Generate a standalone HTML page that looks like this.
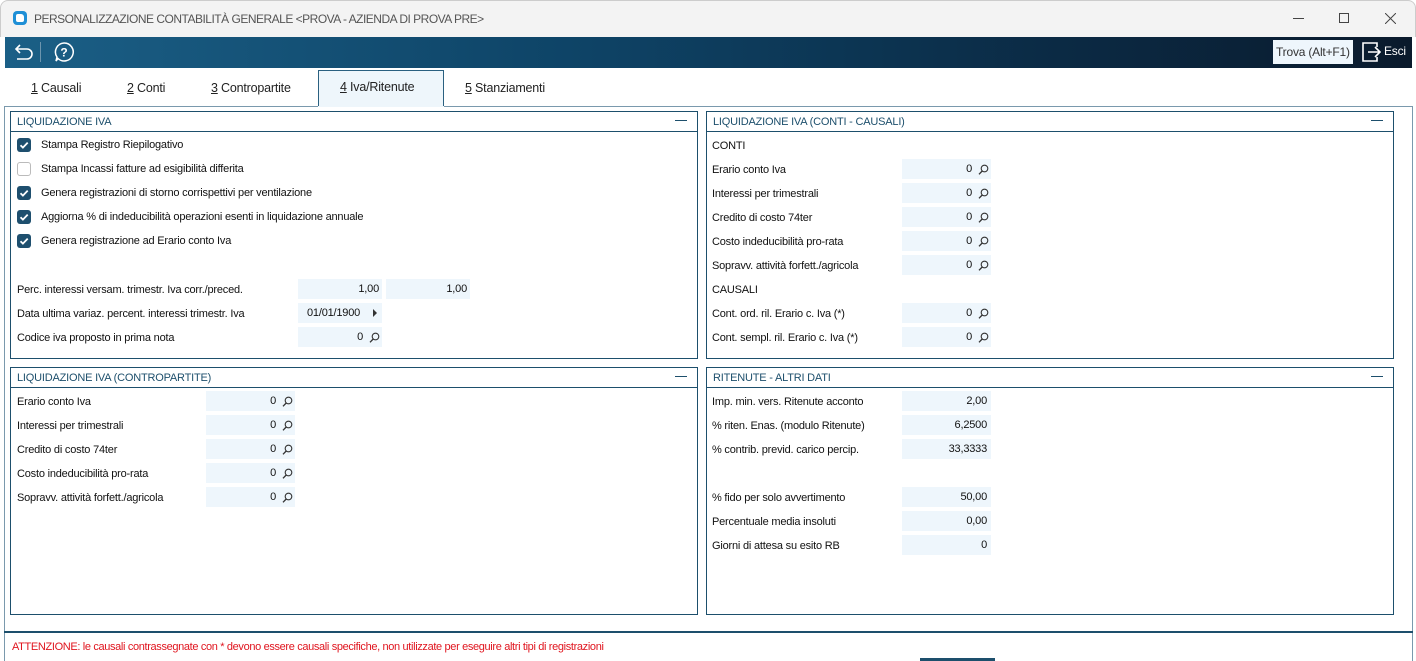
<!DOCTYPE html>
<html><head><meta charset="utf-8"><style>
*{margin:0;padding:0;box-sizing:border-box}
body{width:1416px;height:661px;background:#fff;font-family:"Liberation Sans",sans-serif;font-size:11px;letter-spacing:-0.2px;color:#111;position:relative;overflow:hidden}
.a{position:absolute}
.title{left:0;top:0;width:1416px;height:37px;background:#f3f3f3;border:1px solid #ccc;border-bottom:none;border-radius:8px 8px 0 0}
.tb{left:5px;top:37px;width:1407px;height:31px;background:linear-gradient(90deg,#1b5f86 0%,#0e4467 40%,#0b2a44 75%,#0a1a2c 100%)}
.tab{top:81px;font-size:12.5px;color:#222}
.panel{border:1px solid #1d4f6c;background:#fff}
.ph{position:absolute;left:0;top:0;right:0;height:20px;border-bottom:1px solid #1d4f6c;color:#1d4f6c;font-size:11px;padding:4px 0 0 6px}
.ph .m{position:absolute;right:10px;top:8px;width:12px;height:1px;background:#1d4f6c}
.cb{width:14px;height:14px;border-radius:3px;background:#1e4f6e}
.cb svg{display:block}
.cbe{width:14px;height:14px;border-radius:3px;border:1px solid #bbb;background:#fff}
.f{background:#eef6fc;height:20px;text-align:right;padding:4px 0 0 0}
</style></head><body>
<div class="a title"></div>
<div class="a" style="left:13px;top:11px;width:14px;height:14px;background:#1e8fd6;border-radius:4px"></div>
<div class="a" style="left:16px;top:14px;width:8px;height:8px;background:#fff;border-radius:2px 3px 2px 2px"></div>
<div class="a" style="left:34px;top:12px;font-size:12px;letter-spacing:-0.5px;color:#555">PERSONALIZZAZIONE CONTABILITÀ GENERALE &lt;PROVA - AZIENDA DI PROVA PRE&gt;</div>
<div class="a" style="left:1293px;top:18px;width:11px;height:1px;background:#444"></div>
<div class="a" style="left:1339px;top:13px;width:10px;height:10px;border:1px solid #444"></div>
<svg class="a" style="left:1385px;top:13px" width="11" height="11"><path d="M0 0L11 11M11 0L0 11" stroke="#444" stroke-width="1"/></svg>
<div class="a tb"></div>
<svg class="a" style="left:13px;top:42px" width="22" height="20"><path d="M3 7h11a5 5 0 0 1 0 10H4M7 3L3 7l4 4" stroke="#fff" stroke-width="1.6" fill="none"/></svg>
<div class="a" style="left:40px;top:42px;width:1px;height:20px;background:#6c95ae"></div>
<svg class="a" style="left:53px;top:41px" width="22" height="22"><path d="M11 2a9 9 0 1 1-6 15.5L3 20l1-4A9 9 0 0 1 11 2z" stroke="#fff" stroke-width="1.5" fill="none"/><text x="11" y="15.5" font-size="12" font-family="Liberation Sans" fill="#fff" text-anchor="middle" font-weight="bold">?</text></svg>
<div class="a" style="left:1273px;top:40px;width:80px;height:24px;background:#eef6fc;color:#333;font-size:12px;padding:5px 0 0 3px">Trova (Alt+F1)</div>
<svg class="a" style="left:1361px;top:41px" width="20" height="22"><path d="M8 2H2v18h6M2 2h14v4M16 16v4H2" stroke="#fff" stroke-width="1.6" fill="none"/><path d="M7 11h12M14 6l5 5-5 5" stroke="#fff" stroke-width="1.6" fill="none"/></svg>
<div class="a" style="left:1384px;top:44px;color:#fff;font-size:12px">Esci</div>

<div class="a" style="left:318px;top:70px;width:126px;height:37px;background:#eef6fb;border:1px solid #2a6080;border-bottom:none"></div>
<div class="a tab" style="left:31px"><u>1</u> Causali</div>
<div class="a tab" style="left:127px"><u>2</u> Conti</div>
<div class="a tab" style="left:211px"><u>3</u> Contropartite</div>
<div class="a tab" style="left:340px;top:80px"><u>4</u> Iva/Ritenute</div>
<div class="a tab" style="left:465px"><u>5</u> Stanziamenti</div>
<div class="a" style="left:4px;top:106px;width:1409px;height:555px;border:1px solid #7a99ad;border-bottom:none"></div>
<div class="a" style="left:318px;top:106px;width:126px;height:1px;background:#eef6fb"></div>

<div class="a panel" style="left:10px;top:111px;width:688px;height:248px"><div class="ph">LIQUIDAZIONE IVA<div class="m"></div></div></div>
<div class="a cb" style="left:17px;top:138px"><svg width="14" height="14"><path d="M3.5 7.2l2.4 2.4 4.8-5" stroke="#fff" stroke-width="1.8" fill="none"/></svg></div>
<div class="a" style="left:41px;top:139px">Stampa Registro Riepilogativo</div>
<div class="a cbe" style="left:17px;top:162px"></div>
<div class="a" style="left:41px;top:163px">Stampa Incassi fatture ad esigibilità differita</div>
<div class="a cb" style="left:17px;top:186px"><svg width="14" height="14"><path d="M3.5 7.2l2.4 2.4 4.8-5" stroke="#fff" stroke-width="1.8" fill="none"/></svg></div>
<div class="a" style="left:41px;top:187px">Genera registrazioni di storno corrispettivi per ventilazione</div>
<div class="a cb" style="left:17px;top:210px"><svg width="14" height="14"><path d="M3.5 7.2l2.4 2.4 4.8-5" stroke="#fff" stroke-width="1.8" fill="none"/></svg></div>
<div class="a" style="left:41px;top:211px">Aggiorna % di indeducibilità operazioni esenti in liquidazione annuale</div>
<div class="a cb" style="left:17px;top:234px"><svg width="14" height="14"><path d="M3.5 7.2l2.4 2.4 4.8-5" stroke="#fff" stroke-width="1.8" fill="none"/></svg></div>
<div class="a" style="left:41px;top:235px">Genera registrazione ad Erario conto Iva</div>
<div class="a" style="left:17px;top:284px">Perc. interessi versam. trimestr. Iva corr./preced.</div>
<div class="a f" style="left:298px;top:279px;width:84px;padding-right:3px">1,00</div>
<div class="a f" style="left:386px;top:279px;width:84px;padding-right:3px">1,00</div>
<div class="a" style="left:17px;top:308px">Data ultima variaz. percent. interessi trimestr. Iva</div>
<div class="a f" style="left:298px;top:303px;width:84px;text-align:left;padding-left:9px">01/01/1900</div>
<svg class="a" style="left:373px;top:309px" width="5" height="8"><path d="M0 0L4 4 0 8z" fill="#333"/></svg>
<div class="a" style="left:17px;top:332px">Codice iva proposto in prima nota</div>
<div class="a f" style="left:298px;top:327px;width:84px;padding-right:19px">0</div>

<div class="a panel" style="left:706px;top:111px;width:688px;height:248px"><div class="ph">LIQUIDAZIONE IVA (CONTI - CAUSALI)<div class="m"></div></div></div>
<div class="a" style="left:712px;top:140px">CONTI</div>
<div class="a" style="left:712px;top:284px">CAUSALI</div>

<div class="a panel" style="left:10px;top:367px;width:688px;height:248px"><div class="ph">LIQUIDAZIONE IVA (CONTROPARTITE)<div class="m"></div></div></div>
<div class="a panel" style="left:706px;top:367px;width:688px;height:248px"><div class="ph">RITENUTE - ALTRI DATI<div class="m"></div></div></div>

<div id="dyn"></div>
<div class="a" style="left:4px;top:631px;width:1409px;height:2px;background:#1d4f6c"></div>
<div class="a" style="left:12px;top:641px;color:#e0141e;font-size:11px;letter-spacing:-0.35px">ATTENZIONE: le causali contrassegnate con * devono essere causali specifiche, non utilizzate per eseguire altri tipi di registrazioni</div>
<div class="a" style="left:920px;top:658px;width:75px;height:3px;background:#1d4f6c"></div>

<script>
function mag(x,y){return '<svg class="a" style="left:'+x+'px;top:'+y+'px" width="11" height="11"><circle cx="6.5" cy="4.5" r="3.3" stroke="#333" stroke-width="1.1" fill="none"/><path d="M4.2 7L1 10.3" stroke="#333" stroke-width="1.3"/></svg>';}
var h='';
function row(lx,fx,y,label,val,m){
 h+='<div class="a" style="left:'+lx+'px;top:'+(y+5)+'px">'+label+'</div>';
 h+='<div class="a f" style="left:'+fx+'px;top:'+y+'px;width:89px;padding-right:'+(m?19:4)+'px">'+val+'</div>';
 if(m)h+=mag(fx+76,y+5);
}
var c=[["Erario conto Iva","0"],["Interessi per trimestrali","0"],["Credito di costo 74ter","0"],["Costo indeducibilità pro-rata","0"],["Sopravv. attività forfett./agricola","0"]];
c.forEach(function(r,i){row(712,902,159+24*i,r[0],r[1],1);row(17,206,391+24*i,r[0],r[1],1);});
row(712,902,303,"Cont. ord. ril. Erario c. Iva (*)","0",1);
row(712,902,327,"Cont. sempl. ril. Erario c. Iva (*)","0",1);
h+=mag(369,332);
var r4=[[391,"Imp. min. vers. Ritenute acconto","2,00"],[415,"% riten. Enas. (modulo Ritenute)","6,2500"],[439,"% contrib. previd. carico percip.","33,3333"],[487,"% fido per solo avvertimento","50,00"],[511,"Percentuale media insoluti","0,00"],[535,"Giorni di attesa su esito RB","0"]];
r4.forEach(function(r){row(712,902,r[0],r[1],r[2],0);});
document.getElementById('dyn').innerHTML=h;
</script>
</body></html>
